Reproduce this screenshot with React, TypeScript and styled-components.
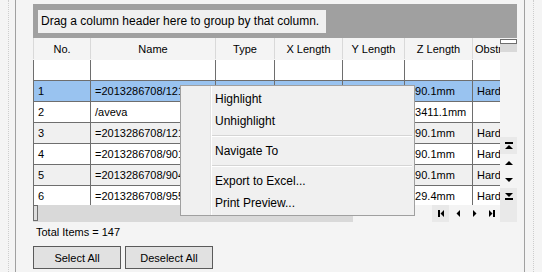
import { FC } from 'react';
import styled, { createGlobalStyle } from 'styled-components';

const PAGE_BG = '#f4f4f4';
const GRID_LINE = '#6e6e6e';
const HEADER_LINE = '#d9d9d9';
const SELECTED = '#99c3f0';
const ALT_ROW = '#f0f0f0';
const ROW_HEIGHT = 21;

type Column = { key: string; title: string; width: number };

const COLUMNS: Column[] = [
  { key: 'no', title: 'No.', width: 57 },
  { key: 'name', title: 'Name', width: 125 },
  { key: 'type', title: 'Type', width: 59 },
  { key: 'x', title: 'X Length', width: 68 },
  { key: 'y', title: 'Y Length', width: 62 },
  { key: 'z', title: 'Z Length', width: 68 },
  { key: 'obstruction', title: 'Obstruction', width: 60 },
];

// type / x / y sit under the context menu in the screenshot, so they stay empty here
const ROWS: Record<string, string>[] = [
  { no: '1', name: '=2013286708/12145', z: '190.1mm', obstruction: 'Hard' },
  { no: '2', name: '/aveva', z: '13411.1mm', obstruction: '' },
  { no: '3', name: '=2013286708/12152', z: '190.1mm', obstruction: 'Hard' },
  { no: '4', name: '=2013286708/90117', z: '190.1mm', obstruction: 'Hard' },
  { no: '5', name: '=2013286708/90406', z: '190.1mm', obstruction: 'Hard' },
  { no: '6', name: '=2013286708/95512', z: '129.4mm', obstruction: 'Hard' },
];

const MENU_ITEMS: (string | null)[] = [
  'Highlight',
  'Unhighlight',
  null,
  'Navigate To',
  null,
  'Export to Excel...',
  'Print Preview...',
];

const GlobalStyle = createGlobalStyle`
  html, body {
    margin: 0;
    padding: 0;
    background: ${PAGE_BG};
  }
  body {
    font-family: "Liberation Sans", Arial, sans-serif;
    font-size: 11px;
    color: #000;
  }
`;

const Window = styled.div`
  position: relative;
  display: flex;
  width: 542px;
  height: 272px;
  overflow: hidden;
  background: ${PAGE_BG};
`;

const SideRail = styled.div<{ $side: 'left' | 'right' }>`
  flex: none;
  display: flex;
  box-sizing: border-box;
  width: ${(p) => (p.$side === 'left' ? 16 : 18)}px;
  padding-left: 8px;
  ${(p) => (p.$side === 'left' ? 'border-right' : 'border-left')}: 1px solid #a0a0a0;
`;

const DottedLine = styled.div`
  border-left: 1px dotted #cdcdcd;
`;

const Main = styled.div`
  flex: none;
  width: 508px;
  box-sizing: border-box;
  padding: 4px 7px 0 17px;
  display: flex;
  flex-direction: column;
`;

const GroupPanel = styled.div`
  height: 34px;
  box-sizing: border-box;
  padding: 6px 5px 0;
  background: #a0a0a0;
`;

const GroupHint = styled.div`
  width: 288px;
  height: 23px;
  box-sizing: border-box;
  padding-left: 3px;
  line-height: 23px;
  font-size: 12px;
  background: #f0f0f0;
  white-space: nowrap;
`;

const GridFrame = styled.div`
  display: grid;
  grid-template-columns: 467px 17px;
  grid-template-rows: 167px 17px;
`;

const Viewport = styled.div`
  overflow: hidden;
`;

const Row = styled.div<{ $bg: string; $height: number; $line: string }>`
  display: flex;
  height: ${(p) => p.$height}px;
  box-sizing: border-box;
  line-height: ${(p) => p.$height - 1}px;
  background: ${(p) => p.$bg};
  border-bottom: 1px solid ${(p) => p.$line};
`;

const Cell = styled.div<{ $width: number }>`
  flex: none;
  width: ${(p) => p.$width}px;
  box-sizing: border-box;
  padding: 0 4px;
  border-left: 1px solid ${GRID_LINE};
  overflow: hidden;
  white-space: nowrap;
`;

const HeaderCell = styled(Cell)`
  padding: 0 2px;
  text-align: center;
  border-left-color: ${HEADER_LINE};
  line-height: 22px;
`;

const VScroll = styled.div`
  display: flex;
  flex-direction: column;
`;

const VThumb = styled.div`
  margin-top: 1px;
  height: 5px;
  box-sizing: border-box;
  border: 1px solid #6e6e6e;
  background: #fff;
`;

const VTrack = styled.div`
  height: 8px;
  background: #d9d9d9;
`;

const Spacer = styled.div`
  flex: 1;
`;

const BottomBar = styled.div`
  grid-column: 1 / 3;
  display: flex;
`;

const HScroll = styled.div`
  width: 320px;
  height: 17px;
  background: #d9d9d9;
`;

const HThumb = styled.div`
  width: 5px;
  height: 16px;
  box-sizing: border-box;
  border: 1px solid #6e6e6e;
  background: #dedede;
`;

const NavButton = styled.div<{ $shaded?: boolean }>`
  width: 17px;
  height: 17px;
  display: flex;
  align-items: center;
  justify-content: center;
  background: ${(p) => (p.$shaded ? '#e9e9e9' : 'transparent')};
`;

const TotalLabel = styled.div`
  margin-top: 3px;
  padding-left: 3px;
  line-height: 15px;
`;

const ButtonRow = styled.div`
  display: flex;
  gap: 4px;
  margin-top: 6px;
`;

const Button = styled.button`
  width: 88px;
  height: 23px;
  padding: 0;
  font-family: inherit;
  font-size: 11px;
  color: #000;
  background: #e1e1e1;
  border: 1px solid #5a5a5a;
`;

const Menu = styled.div`
  position: absolute;
  left: 180px;
  top: 85px;
  width: 235px;
  box-sizing: border-box;
  padding: 2px 0 1px;
  border: 1px solid #a0a0a0;
  font-size: 12px;
  background: linear-gradient(
    to right,
    #f0f0f0 29px,
    #e2e2e2 29px,
    #e2e2e2 30px,
    #fff 30px,
    #fff 31px,
    #f0f0f0 31px
  );
`;

const MenuItem = styled.div`
  height: 22px;
  line-height: 22px;
  padding-left: 34px;
  white-space: nowrap;
`;

const MenuSeparator = styled.div`
  height: 8px;
  display: flex;
  align-items: center;
  padding: 0 2px 0 31px;

  &::after {
    content: '';
    flex: 1;
    height: 1px;
    background: #d5d5d5;
    border-bottom: 1px solid #fff;
  }
`;

type NavKind = 'first' | 'prev' | 'next' | 'last' | 'top' | 'up' | 'down' | 'bottom';

const NAV_PATHS: Record<NavKind, { w: number; h: number; d: string }> = {
  first: { w: 6, h: 7, d: 'M0 0H2V7H0Z M6 0L2.5 3.5L6 7Z' },
  prev: { w: 4, h: 7, d: 'M4 0L0.5 3.5L4 7Z' },
  next: { w: 4, h: 7, d: 'M0 0L3.5 3.5L0 7Z' },
  last: { w: 6, h: 7, d: 'M0 0L3.5 3.5L0 7Z M4 0H6V7H4Z' },
  top: { w: 8, h: 7, d: 'M0 0H8V2H0Z M0 7L4 3L8 7Z' },
  up: { w: 8, h: 4, d: 'M0 4L4 0L8 4Z' },
  down: { w: 8, h: 4, d: 'M0 0L4 4L8 0Z' },
  bottom: { w: 8, h: 7, d: 'M0 0L4 4L8 0Z M0 5H8V7H0Z' },
};

const NavIcon: FC<{ kind: NavKind }> = ({ kind }) => {
  const { w, h, d } = NAV_PATHS[kind];
  return (
    <svg width={w} height={h} viewBox={`0 0 ${w} ${h}`}>
      <path d={d} fill="#000" />
    </svg>
  );
};

const rowBackground = (index: number) => {
  if (index === 0) return SELECTED;
  return index % 2 === 0 ? ALT_ROW : '#fff';
};

const App: FC = () => {
  return (
    <Window>
      <GlobalStyle />
      <SideRail $side="left">
        <DottedLine />
      </SideRail>
      <Main>
        <GroupPanel>
          <GroupHint>Drag a column header here to group by that column.</GroupHint>
        </GroupPanel>
        <GridFrame>
          <Viewport>
            <Row $bg={PAGE_BG} $height={22} $line="transparent">
              {COLUMNS.map((c) => (
                <HeaderCell key={c.key} $width={c.width}>
                  {c.title}
                </HeaderCell>
              ))}
            </Row>
            <Row $bg="#fff" $height={ROW_HEIGHT} $line={GRID_LINE}>
              {COLUMNS.map((c) => (
                <Cell key={c.key} $width={c.width} />
              ))}
            </Row>
            {ROWS.map((r, index) => (
              <Row key={r.no} $bg={rowBackground(index)} $height={ROW_HEIGHT} $line={GRID_LINE}>
                {COLUMNS.map((c) => (
                  <Cell key={c.key} $width={c.width}>
                    {r[c.key] ?? ''}
                  </Cell>
                ))}
              </Row>
            ))}
          </Viewport>
          <VScroll>
            <VThumb />
            <VTrack />
            <Spacer />
            <NavButton $shaded>
              <NavIcon kind="top" />
            </NavButton>
            <NavButton>
              <NavIcon kind="up" />
            </NavButton>
            <NavButton>
              <NavIcon kind="down" />
            </NavButton>
            <NavButton $shaded>
              <NavIcon kind="bottom" />
            </NavButton>
          </VScroll>
          <BottomBar>
            <HScroll>
              <HThumb />
            </HScroll>
            <Spacer />
            <NavButton $shaded>
              <NavIcon kind="first" />
            </NavButton>
            <NavButton>
              <NavIcon kind="prev" />
            </NavButton>
            <NavButton>
              <NavIcon kind="next" />
            </NavButton>
            <NavButton>
              <NavIcon kind="last" />
            </NavButton>
            <NavButton $shaded />
          </BottomBar>
        </GridFrame>
        <TotalLabel>Total Items = 147</TotalLabel>
        <ButtonRow>
          <Button>Select All</Button>
          <Button>Deselect All</Button>
        </ButtonRow>
      </Main>
      <SideRail $side="right">
        <DottedLine />
      </SideRail>
      <Menu>
        {MENU_ITEMS.map((item, i) =>
          item ? <MenuItem key={i}>{item}</MenuItem> : <MenuSeparator key={i} />
        )}
      </Menu>
    </Window>
  );
};

export default App;
